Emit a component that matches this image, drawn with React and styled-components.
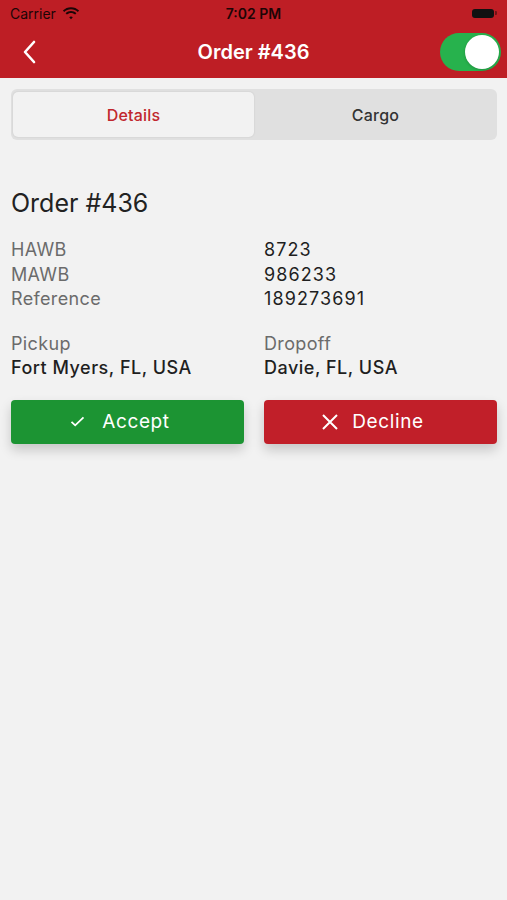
import styled, { createGlobalStyle } from 'styled-components'

const Global = createGlobalStyle`
  html, body {
    margin: 0;
    padding: 0;
    background: #f2f2f2;
  }
  body {
    font-family: Inter, 'Liberation Sans', sans-serif;
  }
`

const Page = styled.div`
  width: 507px;
  min-height: 900px;
  background: #f2f2f2;
`

const Header = styled.header`
  background: #be1e25;
`

const StatusBar = styled.div`
  height: 26px;
  display: grid;
  grid-template-columns: 1fr auto 1fr;
  align-items: center;
  padding: 0 10px;
  font-size: 14px;
  color: #1c0506;
`

const Carrier = styled.div`
  display: flex;
  align-items: center;
  gap: 6px;
`

const Clock = styled.div`
  font-weight: 600;
`

const Battery = styled.div`
  justify-self: end;
  display: flex;
  align-items: center;
  gap: 1px;
`

const BatteryBody = styled.div`
  width: 22px;
  height: 9px;
  border-radius: 3px;
  background: #111;
`

const BatteryTip = styled.div`
  width: 2px;
  height: 4px;
  border-radius: 0 1px 1px 0;
  background: rgba(0, 0, 0, 0.4);
`

const NavBar = styled.div`
  height: 52px;
  display: grid;
  grid-template-columns: 60px 1fr 60px;
  align-items: center;
`

const BackButton = styled.button`
  border: none;
  background: none;
  padding: 0 0 0 22px;
  display: flex;
  align-items: center;
  cursor: pointer;
`

const Title = styled.h1`
  margin: 0;
  text-align: center;
  font-size: 20px;
  font-weight: 600;
  color: #fff;
`

const Switch = styled.div`
  justify-self: end;
  margin-right: 6px;
  width: 61px;
  height: 38px;
  border-radius: 19px;
  background: #27b24d;
  display: flex;
  align-items: center;
  justify-content: flex-end;
  padding: 0 2px;
  box-sizing: border-box;
`

const Knob = styled.div`
  width: 34px;
  height: 34px;
  border-radius: 50%;
  background: #fff;
  box-shadow: 0 1px 3px rgba(0, 0, 0, 0.2);
`

const Segmented = styled.div`
  margin: 11px 10px 0 11px;
  height: 51px;
  padding: 3px 0 3px 2px;
  box-sizing: border-box;
  border-radius: 6px;
  background: #e0e0e0;
  display: grid;
  grid-template-columns: 241px 1fr;
`

const Tab = styled.div`
  display: flex;
  align-items: center;
  justify-content: center;
  border-radius: 5px;
  font-size: 16px;
  font-weight: 500;
  letter-spacing: 0.2px;
  color: ${p => (p.$active ? '#c1272d' : '#333')};
  background: ${p => (p.$active ? '#f2f2f2' : 'transparent')};
  box-shadow: ${p => (p.$active ? '0 0 2px rgba(0,0,0,0.12)' : 'none')};
`

const Content = styled.main`
  padding: 0 10px 0 11px;
`

const OrderTitle = styled.h2`
  margin: 48px 0 0;
  font-size: 25px;
  line-height: 30px;
  font-weight: 400;
  color: #222;
`

const InfoGrid = styled.div`
  margin-top: ${p => p.$gap}px;
  display: grid;
  grid-template-columns: 233px 1fr;
  column-gap: 20px;
  font-size: 18px;
  line-height: 24.5px;
  letter-spacing: 0.35px;
`

const Label = styled.div`
  color: #6b6b6b;
`

const Value = styled.div`
  color: #1f1f1f;
  font-weight: ${p => (p.$strong ? 500 : 400)};
  letter-spacing: ${p => (p.$strong ? 0.5 : 1.1)}px;
`

const Actions = styled.div`
  margin-top: 19px;
  display: grid;
  grid-template-columns: 233px 233px;
  column-gap: 20px;
`

const ActionButton = styled.button`
  height: 44px;
  border: none;
  border-radius: 4px;
  background: ${p => p.$color};
  color: #fff;
  font-family: Inter, 'Liberation Sans', sans-serif;
  font-size: 19px;
  letter-spacing: 0.6px;
  display: flex;
  align-items: center;
  justify-content: center;
  gap: ${p => p.$gap}px;
  padding: 0 15px 0 0;
  box-shadow: 0 6px 12px rgba(0, 0, 0, 0.18);
  cursor: pointer;
`

const Wifi = () => (
  <svg width='18' height='13' viewBox='0 0 18 13'>
    <path d='M9 2.2c2.6 0 5 1 6.8 2.7l1.3-1.4C14.9 1.4 12.1 0.2 9 0.2S3.1 1.4 0.9 3.5l1.3 1.4C4 3.2 6.4 2.2 9 2.2z' fill='#1c0506' />
    <path d='M9 6c1.6 0 3 0.6 4.1 1.6l1.3-1.4C13 4.8 11.1 4 9 4S5 4.8 3.6 6.2l1.3 1.4C6 6.6 7.4 6 9 6z' fill='#1c0506' />
    <path d='M9 9.6c0.7 0 1.3 0.3 1.8 0.7L9 12.3 7.2 10.3C7.7 9.9 8.3 9.6 9 9.6z' fill='#1c0506' />
  </svg>
)

const Chevron = () => (
  <svg width='14' height='24' viewBox='0 0 14 24'>
    <path d='M12 2 L3 12 L12 22' fill='none' stroke='#fff' strokeWidth='2.6' strokeLinecap='round' strokeLinejoin='round' />
  </svg>
)

const Check = () => (
  <svg width='15' height='11' viewBox='0 0 15 11'>
    <path d='M1.5 5.8 L5.2 9.3 L13.5 1.3' fill='none' stroke='#fff' strokeWidth='1.8' />
  </svg>
)

const Cross = () => (
  <svg width='16' height='16' viewBox='0 0 16 16'>
    <path d='M1 1 L15 15 M15 1 L1 15' fill='none' stroke='#fff' strokeWidth='2' />
  </svg>
)

const App = () => {
  const refs = [
    ['HAWB', '8723'],
    ['MAWB', '986233'],
    ['Reference', '189273691'],
  ]

  return (
    <Page>
      <Global />
      <Header>
        <StatusBar>
          <Carrier>
            Carrier
            <Wifi />
          </Carrier>
          <Clock>7:02 PM</Clock>
          <Battery>
            <BatteryBody />
            <BatteryTip />
          </Battery>
        </StatusBar>
        <NavBar>
          <BackButton aria-label='Back'>
            <Chevron />
          </BackButton>
          <Title>Order #436</Title>
          <Switch>
            <Knob />
          </Switch>
        </NavBar>
      </Header>

      <Segmented>
        <Tab $active>Details</Tab>
        <Tab>Cargo</Tab>
      </Segmented>

      <Content>
        <OrderTitle>Order #436</OrderTitle>
        <InfoGrid $gap={20}>
          {refs.map(([label, value]) => [
            <Label key={label}>{label}</Label>,
            <Value key={value}>{value}</Value>,
          ])}
        </InfoGrid>
        <InfoGrid $gap={20}>
          <Label>Pickup</Label>
          <Label>Dropoff</Label>
          <Value $strong>Fort Myers, FL, USA</Value>
          <Value $strong>Davie, FL, USA</Value>
        </InfoGrid>
        <Actions>
          <ActionButton $color='#1c9433' $gap={17}>
            <Check />
            Accept
          </ActionButton>
          <ActionButton $color='#c11f29' $gap={14}>
            <Cross />
            Decline
          </ActionButton>
        </Actions>
      </Content>
    </Page>
  )
}

export default App
